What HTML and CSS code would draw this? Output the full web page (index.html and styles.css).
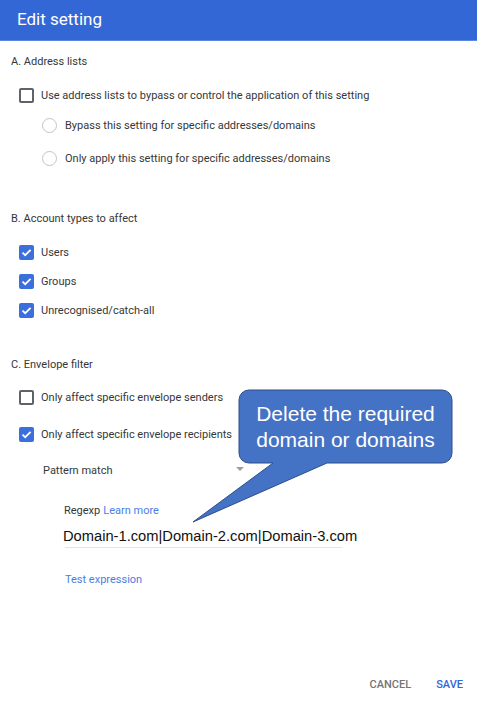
FILE: index.html
```html
<!DOCTYPE html>
<html>
<head>
<meta charset="utf-8">
<link rel="stylesheet" href="styles.css">
</head>
<body>
<div class="page">
  <header class="hdr">Edit setting</header>
  <main class="content">
    <div class="row title m11">A. Address lists</div>
    <label class="row cb m14"><span class="box"></span><span>Use address lists to bypass or control the application of this setting</span></label>
    <label class="row rd m10"><span class="radio"></span><span>Bypass this setting for specific addresses/domains</span></label>
    <label class="row rd m13"><span class="radio"></span><span>Only apply this setting for specific addresses/domains</span></label>

    <div class="row title m40">B. Account types to affect</div>
    <label class="row cb m14"><span class="box on"><svg viewBox="0 0 15 15" width="15" height="15"><path d="M3.5 7.6 L6.2 10.2 L11.6 4.8" fill="none" stroke="#fff" stroke-width="1.8"/></svg></span><span>Users</span></label>
    <label class="row cb m9"><span class="box on"><svg viewBox="0 0 15 15" width="15" height="15"><path d="M3.5 7.6 L6.2 10.2 L11.6 4.8" fill="none" stroke="#fff" stroke-width="1.8"/></svg></span><span>Groups</span></label>
    <label class="row cb m9"><span class="box on"><svg viewBox="0 0 15 15" width="15" height="15"><path d="M3.5 7.6 L6.2 10.2 L11.6 4.8" fill="none" stroke="#fff" stroke-width="1.8"/></svg></span><span>Unrecognised/catch-all</span></label>

    <div class="row title m34">C. Envelope filter</div>
    <label class="row cb m13"><span class="box"></span><span>Only affect specific envelope senders</span></label>
    <label class="row cb m17"><span class="box on"><svg viewBox="0 0 15 15" width="15" height="15"><path d="M3.5 7.6 L6.2 10.2 L11.6 4.8" fill="none" stroke="#fff" stroke-width="1.8"/></svg></span><span>Only affect specific envelope recipients</span></label>
    <div class="row select m16"><span>Pattern match</span><span class="arrow"></span></div>
    <div class="row regexp m20">Regexp <a class="link">Learn more</a></div>
    <div class="field"><span class="value">Domain-1.com|Domain-2.com|Domain-3.com</span></div>
    <div class="row test m21"><a class="link">Test expression</a></div>
  </main>
  <footer class="actions">
    <span class="btn cancel">CANCEL</span>
    <span class="btn save">SAVE</span>
  </footer>

  <div class="callout">
    <svg class="bubble" width="477" height="703" viewBox="0 0 477 703">
      <path d="M249,390 H442 A10,10 0 0 1 452,400 V453 A10,10 0 0 1 442,463 H327 L193,522 L273,463 H249 A10,10 0 0 1 239,453 V400 A10,10 0 0 1 249,390 Z" fill="#4472c4" stroke="#2f4f8a" stroke-width="1"/>
    </svg>
    <div class="callout-text">Delete the required<br>domain or domains</div>
  </div>
</div>
</body>
</html>
```
FILE: styles.css
```css
* { box-sizing: border-box; }
html, body { margin: 0; padding: 0; background: #fff; }
body { font-family: Roboto, "Noto Sans", sans-serif; }
.page { position: relative; width: 477px; height: 703px; display: flex; flex-direction: column; overflow: hidden; }
.hdr {
  height: 41px; flex: none; background: #3367d6; color: #fff;
  font-size: 17px; padding-left: 17px; display: flex; align-items: center;
  border-bottom: 1px solid #5b87e0; padding-bottom: 2px;
}
.content { padding-left: 11px; display: flex; flex-direction: column; }
.row { height: 20px; display: flex; align-items: center; font-size: 11px; color: #353739; white-space: nowrap; }
.m9 { margin-top: 9px; } .m10 { margin-top: 10px; } .m11 { margin-top: 10px; } .m13 { margin-top: 13px; }
.m14 { margin-top: 14px; } .m16 { margin-top: 16px; } .m17 { margin-top: 17px; } .m20 { margin-top: 20px; }
.m21 { margin-top: 21px; } .m34 { margin-top: 34px; } .m40 { margin-top: 40px; }
.cb { padding-left: 8px; gap: 7px; }
.box { width: 15px; height: 15px; border: 2px solid #5f6368; border-radius: 2px; flex: none; display: flex; }
.box.on { border: none; background: #3b6fdb; }
.rd { padding-left: 31px; gap: 8px; }
.radio { width: 15px; height: 15px; border: 1.5px solid #c4c4c4; border-radius: 50%; flex: none; }
.select { padding-left: 32px; width: 233px; justify-content: space-between; }
.arrow { width: 0; height: 0; border-left: 4px solid transparent; border-right: 4px solid transparent; border-top: 4px solid #9e9e9e; margin-top: -2px; }
.regexp { padding-left: 53px; gap: 3px; }
.link { color: #4a7ee6; }
.field { margin: 5px 0 0 54px; width: 277px; height: 23px; border-bottom: 1px solid #e3e3e3; display: flex; align-items: center; }
.value { font-family: "Liberation Sans", Arial, sans-serif; font-size: 14.7px; color: #111; margin-left: -2px; white-space: nowrap; }
.test { padding-left: 54px; }
.actions { margin-top: auto; height: 25px; display: flex; justify-content: flex-end; align-items: flex-start; gap: 25px; padding-right: 14px; }
.btn { font-size: 11px; font-weight: 500; }
.cancel { color: #757575; }
.save { color: #3367d6; }
.callout { position: absolute; left: 0; top: 0; width: 477px; height: 703px; pointer-events: none; }
.bubble { position: absolute; left: 0; top: 0; }
.callout-text {
  position: absolute; left: 239px; top: 401px; width: 213px; text-align: center;
  font-family: "Liberation Sans", Arial, sans-serif; font-size: 21px; line-height: 26px; color: #fff;
}
```
